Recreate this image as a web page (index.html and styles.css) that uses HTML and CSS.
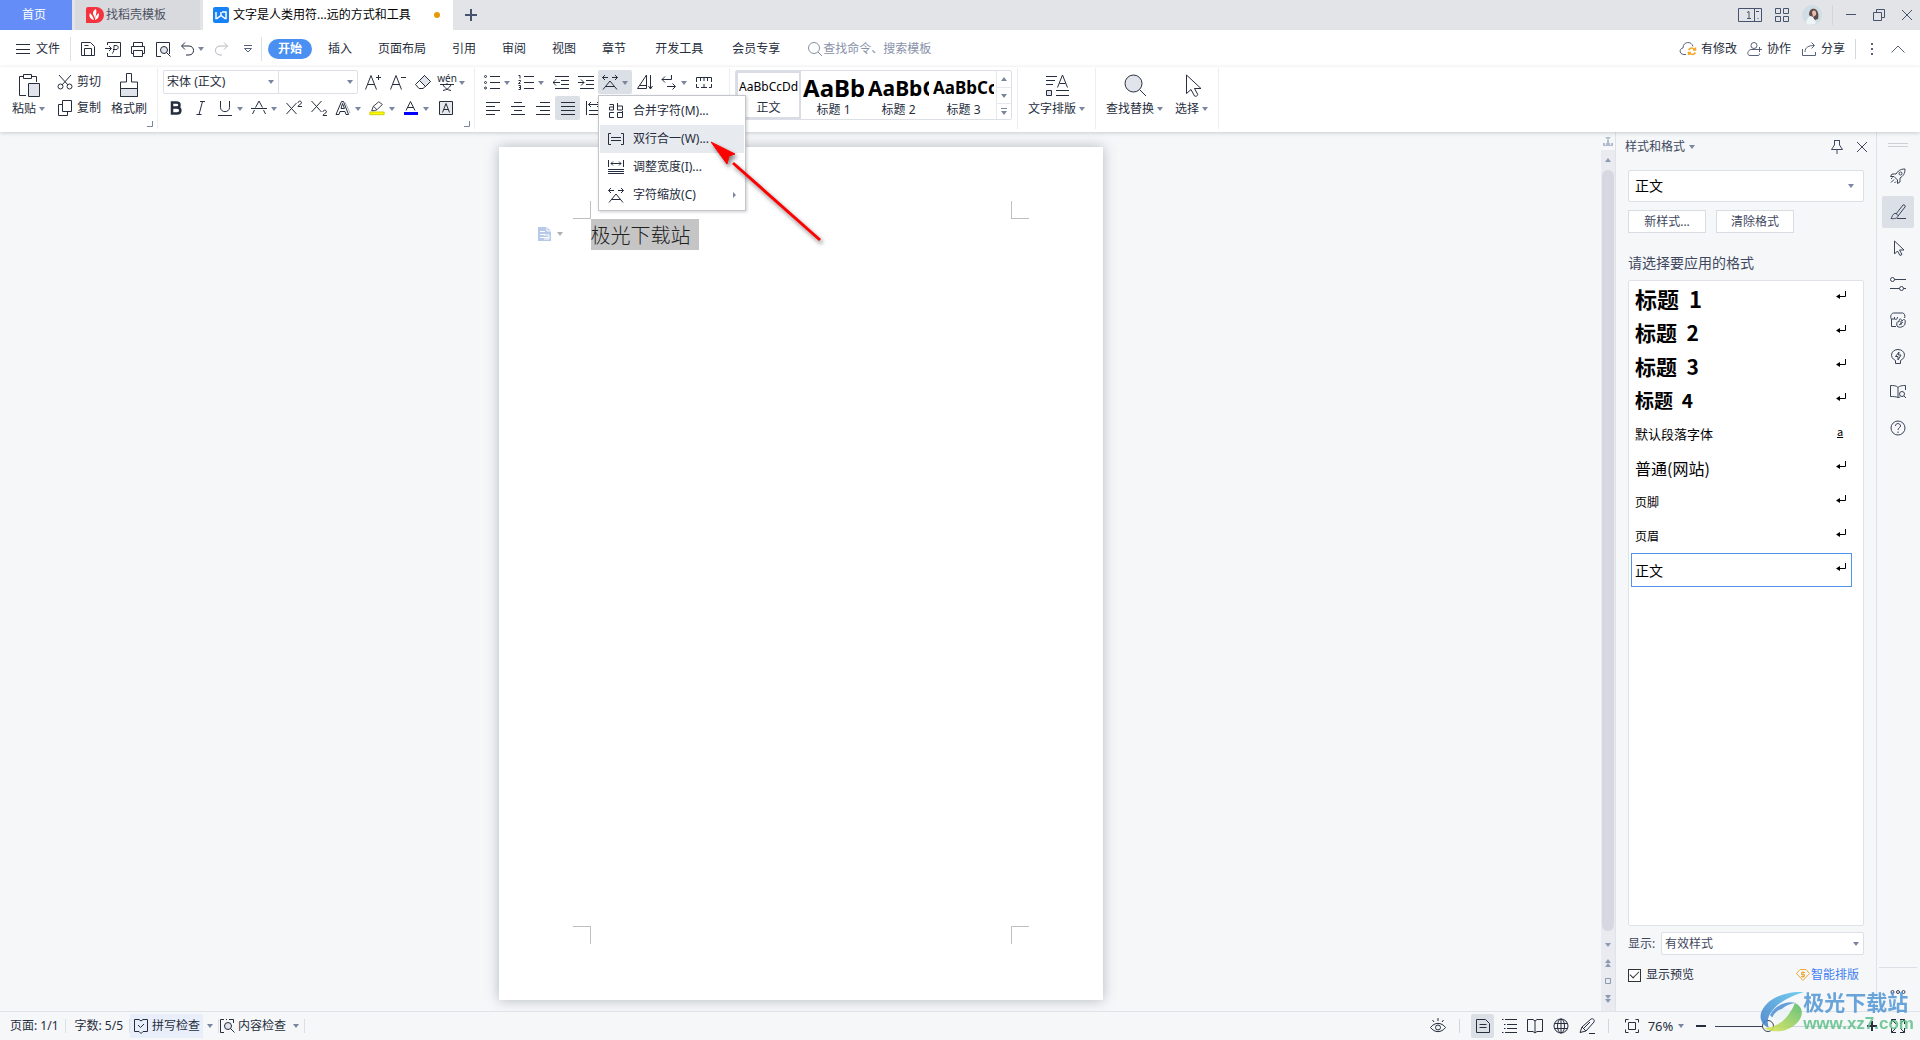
FILE: index.html
```html
<!DOCTYPE html>
<html lang="zh-CN">
<head>
<meta charset="utf-8">
<title>文字是人类用符...远的方式和工具</title>
<link rel="stylesheet" href="styles.css">
</head>
<body>
<svg class="sprite" aria-hidden="true">
  <symbol id="caret" viewBox="0 0 6 4"><path d="M0 0h6L3 4z" fill="currentColor" stroke="none"/></symbol>
  <symbol id="menu" viewBox="0 0 16 16"><path d="M1 3.500h14M1 8.500h14M1 12.500h14"/></symbol>
  <symbol id="save" viewBox="0 0 16 16"><path d="M1.500 1.500h9l4 4v9h-13zM4.500 14.500v-7h7v7M4.500 4.500h4"/></symbol>
  <symbol id="export" viewBox="0 0 16 16"><path d="M2.500 4V1.500h13v14h-13V12M0 7.500h6M4 5l2.500 2.500L4 10M7 12.500c2-1 2-4 2-8h2c3 0 3 4 0 4H8"/></symbol>
  <symbol id="print" viewBox="0 0 16 16"><path d="M3.500 5V1.500h9V5M3.500 12.500h-2v-7h13v7h-2M3.500 9.500h9v6h-9z"/></symbol>
  <symbol id="preview" viewBox="0 0 16 16"><path d="M6 15.500H1.500v-14h13V13"/><circle cx="9" cy="9" r="3.500" fill="#e1e4ea"/><path d="m11.500 11.500 4 4"/></symbol>
  <symbol id="undo" viewBox="0 0 16 16"><path d="M5 1.500 1.500 5 5 8.500M2 5h7c6 0 6 9 0 9H6"/></symbol>
  <symbol id="redo" viewBox="0 0 16 16"><path d="M11 1.500 14.500 5 11 8.500M14 5H7C1 5 1 14 7 14h2"/></symbol>
  <symbol id="more" viewBox="0 0 10 10"><path d="M1 1.500h8M1.500 4.500h7L5 8z"/></symbol>
  <symbol id="search" viewBox="0 0 16 16"><circle cx="7" cy="7" r="5.500"/><path d="m11 11 4 4"/></symbol>
  <symbol id="cloud" viewBox="0 0 18 16"><path d="M7 13.500H5c-5 0-5-6-1-6.500C4 0 13 0 14 5.500"/><path d="M9.500 9c2-3 6-2 6.500 0M16.500 6.500V9H14M16.500 11.500c-2 3-6 2-6.500 0M9.500 14v-2.500H12" stroke="#f5a623" stroke-width="1.500"/></symbol>
  <symbol id="people" viewBox="0 0 16 16"><circle cx="7" cy="4.500" r="3"/><path d="M10 8.500H4C.5 9-.5 14.500 3 14.500h8c1.500 0 1.500-1 1.500-2M10 8.500h5M12.500 6v5"/></symbol>
  <symbol id="share" viewBox="0 0 16 16"><path d="M1.500 8v6.500h13V11M4 11c0-5 4-6.500 9-6.500M10.500 1.500l3 3-3 3"/></symbol>
  <symbol id="up" viewBox="0 0 16 10"><path d="M1.500 8.500 8 2l6.500 6.500"/></symbol>
  <symbol id="paste" viewBox="0 0 24 26"><path d="M6 4.500H2.500v19H9M15 4.500h4.500V10M6.500 2.500h8v4h-8z"/><path d="M11.500 11.500h11v13h-11z" fill="#e1e4ea"/></symbol>
  <symbol id="cut" viewBox="0 0 16 16"><path d="m2 1 9 10M14 1 5 11"/><circle cx="3.500" cy="12.500" r="2.500"/><circle cx="12.500" cy="12.500" r="2.500"/></symbol>
  <symbol id="copy" viewBox="0 0 16 16"><path d="M5.500.5h9v11h-9zM5.500 4.500h-4v11h9v-4"/></symbol>
  <symbol id="brush" viewBox="0 0 24 26"><path d="M9.500 10V1.500h5V10h6v14.500h-17V10z"/><path d="M3.500 16.500h17v8h-17z" fill="#e1e4ea"/></symbol>
  <symbol id="launch" viewBox="0 0 6 6"><path d="M5.500 0v5.500H0"/></symbol>
  <symbol id="grow" viewBox="0 0 16 16"><path d="m.5 15.500 5.500-14 5.500 14M2.500 10.500h7M11 3.500h5M13.500 1v5"/></symbol>
  <symbol id="shrink" viewBox="0 0 16 16"><path d="m.5 15.500 5.500-14 5.500 14M2.500 10.500h7M11 3.500h5"/></symbol>
  <symbol id="eraser" viewBox="0 0 16 16"><path d="m.5 10.500 9-9 6 6-7.500 7H4z"/><path d="m4.500 6.500 6 6 5-5-6-6z" fill="#e1e4ea"/></symbol>
  <symbol id="glyph" viewBox="0 0 16 8"><path d="M1 1.500h14M8 0v1.500M4 2c2 3 4 5 8 5.500M12 2c-2 3-4 5-8 5.500"/></symbol>
  <symbol id="bold" viewBox="0 0 16 16"><path d="M4 2.500h4.500c4 0 4 5 0 5H4zM4 7.500h5c4.500 0 4.500 6 0 6H4z" stroke-width="2.500"/></symbol>
  <symbol id="italic" viewBox="0 0 16 16"><path d="M7 1.500h5M3.500 14.500h5M9.500 1.500 6 14.500"/></symbol>
  <symbol id="underline" viewBox="0 0 16 16"><path d="M3.500 1v6.500c0 5.500 9 5.500 9 0V1M1 15.500h14"/></symbol>
  <symbol id="strike" viewBox="0 0 16 16"><path d="M4.500 7.500 8 1l3.500 6.500M3.500 10 1.500 14M12.500 10l2 4M0 8.500h16"/></symbol>
  <symbol id="super" viewBox="0 0 17 16"><path d="m1 3 10 11M11 3 1 14M12.500 3c0-2.500 3.500-2.500 3.500 0 0 1-3.500 2-3.500 3.500h4"/></symbol>
  <symbol id="sub" viewBox="0 0 17 16"><path d="m1 1 10 11M11 1 1 12M12.500 12c0-2.500 3.500-2.500 3.500 0 0 1-3.500 2-3.500 3.500h4"/></symbol>
  <symbol id="effect" viewBox="0 0 16 16"><path d="M1 14.500 6.500 1.500h2l5 13H11l-1-3H5l-1 3zM6 8.500h3.500l-2-5z"/><path d="m10 2 5 11" stroke="#aeb4c0"/></symbol>
  <symbol id="marker" viewBox="0 0 18 16"><path d="M1 12.500h16v3H1z" fill="#ff0" stroke="#c9c900"/><path d="m3 11 2-5 6-5 4 3-6 6-3 1zM5 6l4 4"/></symbol>
  <symbol id="color" viewBox="0 0 16 16"><path d="M3 10.500 7.500 1.500 12 10.500M4.500 7.500h6"/><path d="M1 12h14v3H1z" fill="#00f" stroke="none"/></symbol>
  <symbol id="shade" viewBox="0 0 16 16"><path d="M1.500 1.500h13v13h-13z" fill="#e6e8ec"/><path d="M4.500 12.500 8 3.500l3.500 9M5.500 9.500h5"/></symbol>
  <symbol id="bullets" viewBox="0 0 16 16"><path d="M6 2.500h10M6 8.500h10M6 14.500h10"/><circle cx="1.500" cy="2.500" r="1"/><circle cx="1.500" cy="8.500" r="1"/><circle cx="1.500" cy="14" r="1"/></symbol>
  <symbol id="numbers" viewBox="0 0 16 16"><path d="M6 2.500h10M6 8.500h10M6 14.500h10M.5 1.500H2v3M.5 6.500h2v1l-2 2h2M.5 11.500h2v4h-2M1 13.500h1"/></symbol>
  <symbol id="outdent" viewBox="0 0 16 16"><path d="M2 2.500h14M8 6.500h8M8 10.500h8M2 14.500h14M0 8.500h7M3 5.500l-3 3 3 3"/></symbol>
  <symbol id="indent" viewBox="0 0 16 16"><path d="M0 2.500h16M8 6.500h8M8 10.500h8M2 14.500h14M0 8.500h6M3 5.500l3 3-3 3"/></symbol>
  <symbol id="scale" viewBox="0 0 16 16"><path d="M.5 3.500H6M3 1 .5 3.500 3 6M10 3.500h5.500M13 1l2.500 2.500L13 6M1 15.500 8 7l7 8.500M4 12.500h8"/></symbol>
  <symbol id="sort" viewBox="0 0 16 16"><path d="M.5 14.500 9.500 1v13.500zM3 11.500h6.500M13.500 1v14M11.500 12l2 3 2-3"/></symbol>
  <symbol id="wrap" viewBox="0 0 16 16"><path d="M10.500 1v4.500H1M4 2.500l-3 3 3 3M6 12.500h8M11.500 9.500l3 3-3 3"/></symbol>
  <symbol id="tabs" viewBox="0 0 16 16"><path d="M.5 8V3.500h15V8M4.500 4v3M8 4v3M11.500 4v3M.5 10v3.500H3M15.500 10v3.500H13M5 13.500h6M8 10v3"/></symbol>
  <symbol id="left" viewBox="0 0 16 16"><path d="M1 2.500h14M1 6.500h9M1 10.500h14M1 14.500h9"/></symbol>
  <symbol id="center" viewBox="0 0 16 16"><path d="M4 2.500h8M1 6.500h14M4 10.500h8M1 14.500h14"/></symbol>
  <symbol id="right" viewBox="0 0 16 16"><path d="M5 2.500h10M1 6.500h14M5 10.500h10M1 14.500h14"/></symbol>
  <symbol id="justify" viewBox="0 0 16 16"><path d="M1 2.500h14M1 6.500h14M1 10.500h14M1 14.500h14"/></symbol>
  <symbol id="spread" viewBox="0 0 16 16"><path d="M1.500 1v14M3.500 4.500h11M6 2 3.500 4.500 6 7M12 2l2.500 2.500L12 7M4 10.500h12M4 14.500h12"/></symbol>
  <symbol id="typeset" viewBox="0 0 24 26"><path d="M1 4.500h11M1 8.500h9M1 12.500h7M12.500 15.500 17.500 3l5 12.500M14.500 11.500h6M11 18.500h13M11 23.500h13"/><path d="M1.500 18.500h5v5h-5z" fill="#e1e4ea"/></symbol>
  <symbol id="find" viewBox="0 0 24 26"><circle cx="10.500" cy="11.500" r="8.500" fill="#e1e4ea"/><path d="m17 18 6 6"/></symbol>
  <symbol id="cursor" viewBox="0 0 24 26"><path d="M6.500 3v18.500l4.500-4 3.500 6.500c2 1 4-1 3-2l-3-5.500H21z"/></symbol>
  <symbol id="combine" viewBox="0 0 16 16"><path d="M1.500 1.500h4v5.500h-4V4h4M9.500 0v7h5V3h-5M6 9.500H1.500v5H6M14.500 8v6.500h-5v-5h5"/></symbol>
  <symbol id="twolines" viewBox="0 0 16 16"><path d="M3 2.500H.5v11H3M13 2.500h2.500v11H13M3 6.500h10M3 9.500h10"/></symbol>
  <symbol id="width" viewBox="0 0 16 16"><path d="M.5 1v7M15.500 1v7M3 4.500h10M5 2.500l-2 2 2 2M11 2.500l2 2-2 2M0 10.500h16M0 12.500h16M0 14.500h16"/></symbol>
  <symbol id="pin" viewBox="0 0 14 14"><path d="M4 .5h6M4.500 1v4l-3 4.500h11l-3-4.500V1M7 9.500V14"/></symbol>
  <symbol id="close" viewBox="0 0 12 12"><path d="m1 1 10 10M11 1 1 11"/></symbol>
  <symbol id="return" viewBox="0 0 10 10"><path d="M9.500 1v5.500H2" stroke="#000"/><path d="M4 4v5L0 6.500z" fill="#000" stroke="none"/></symbol>
  <symbol id="rocket" viewBox="0 0 16 16"><path d="M15 1c-5 0-7 2-9 5H2L.5 8.500H4L7.500 12v3.500L10 14v-4c3-2 5-4 5-9zM1 14.500l3-3M1 11l1.500-1.500M4.500 15 6 13.500"/><circle cx="10.500" cy="5.500" r="1.500"/></symbol>
  <symbol id="pen" viewBox="0 0 16 16"><path d="m6 10 7-9c1-1 3 1 2 2l-7 9M6 9.500c-3-.5-3 2-5 5 3 .5 7 0 7-3zM7 14.500h9"/></symbol>
  <symbol id="arrow" viewBox="0 0 16 16"><path d="M4.500 1v13l3-3 2.500 4.500 2-1-2.500-4.500h4.500z"/></symbol>
  <symbol id="sliders" viewBox="0 0 16 16"><circle cx="2.500" cy="3.500" r="2"/><path d="M4.500 3.500H16M0 12.500h9.500M13.500 12.500H16"/><circle cx="11.500" cy="12.500" r="2"/></symbol>
  <symbol id="store" viewBox="0 0 16 16"><path d="M1.500 7v7.500H6M1.500 7c-2-2 0-6 2-6h9c2 0 3 3 2 5M1.500 7h3V5M4.500 7c2 1 3 0 3-2M7 14c-1-4 1-5 2-4 0-4 2-4 3-1 2-3 4-1 3 2 1 3-6 6-8 3zM9 13l4-3M11 9v4"/></symbol>
  <symbol id="bulb" viewBox="0 0 16 16"><path d="M5.500 12.500C-1 9.500 1 1.500 8 1.500s9 8 2.500 11v3h-5zM9 4 5.500 8.500H8V12l3-5H8.500z"/></symbol>
  <symbol id="bookfind" viewBox="0 0 16 16"><path d="M8 3.500v10c-2-1-5-1-7.500-1v-11c3 0 6 0 7.500 2 2-2 5-2 7.500-2V6M8 13.500l2-.5"/><circle cx="12" cy="10" r="2.500"/><path d="m14 12 2 2"/></symbol>
  <symbol id="help" viewBox="0 0 16 16"><circle cx="8" cy="8" r="7"/><path d="M5.500 6c0-3.500 5-3 5 0 0 1.500-2.500 2-2.500 4M8 11.500V13"/></symbol>
  <symbol id="dots" viewBox="0 0 16 6"><circle cx="2.500" cy="3" r="1.500"/><circle cx="8" cy="3" r="1.500"/><circle cx="13.500" cy="3" r="1.500"/></symbol>
  <symbol id="spell" viewBox="0 0 16 16"><path d="M6 1.500H1.500v12H6l2 2 2-2h4.500v-12H10L8 3zM5 7l2.500 2.500L11 6"/></symbol>
  <symbol id="content" viewBox="0 0 16 16"><path d="M5 1.500H1.500v13H5M10 1.500h4.500V5M7 1.500h1"/><circle cx="9" cy="8" r="3.500" fill="#e1e4ea"/><path d="m11.500 10.500 4 4"/></symbol>
  <symbol id="eye" viewBox="0 0 16 16"><path d="M.5 9.500c4-5.500 11-5.500 15 0-4 5.500-11 5.500-15 0zM8 0v3M2.500 2 4 4M13.500 2 12 4"/><circle cx="8" cy="9.500" r="2.500"/></symbol>
  <symbol id="pagev" viewBox="0 0 16 16"><path d="M1.500 1.500h9l4 4v9h-13zM4.500 6.500h7M4.500 9.500h7"/></symbol>
  <symbol id="outline" viewBox="0 0 16 16"><path d="M1 1.500h1.500M4 1.500h12M3 6.500h1.500M6 6.500h10M3 10.500h1.500M6 10.500h10M1 14.500h1.500M4 14.500h12"/></symbol>
  <symbol id="book" viewBox="0 0 16 16"><path d="M8 3v12L6 13.500H.5v-12H6L8 3l2-1.500h5.500v12H10L8 15"/></symbol>
  <symbol id="globe" viewBox="0 0 16 16"><circle cx="8" cy="8" r="7"/><ellipse cx="8" cy="8" rx="3.500" ry="7"/><path d="M1.500 5.500h13M1.500 10.500h13M8 1v14"/></symbol>
  <symbol id="edit" viewBox="0 0 16 16"><path d="m3 9 9-8c2-1 4 1 3 3l-8 9-6 1.500zM3 9l4 4M5 10l6-6M10 15.500h6"/></symbol>
  <symbol id="fit" viewBox="0 0 16 16"><path d="M1.500 4.500v-3h3M11.500 1.500h3v3M14.500 11.500v3h-3M4.500 14.500h-3v-3M4.500 4.500h7v7h-7z"/></symbol>
  <symbol id="full" viewBox="0 0 16 16"><path d="M1.500 6V1.500H6M10 1.500h4.500V6M14.500 10v4.500H10M6 14.500H1.500V10M1.500 1.500 6 6M14.500 1.500 10 6M14.500 14.500 10 10M1.500 14.500 6 10"/></symbol>
  <symbol id="doc" viewBox="0 0 14 14"><path d="M0 0h9l4 4v10H0z" fill="#b6c9e8" stroke="none"/><path d="M2 4.500h5M2 7.500h5M2 10.500h9M6 8h5v4H6M9 0v4h4" stroke="#fff"/></symbol>
</svg>

<header class="titlebar">
  <button class="doc-tab home">首页</button>
  <button class="doc-tab template"><svg class="i16"><path d="M2 0h8a6 6 0 0 1 0 16H0V2a2 2 0 0 1 2-2z" fill="#f5333f" stroke="none"/><path d="M8 13C3 12 3 8 4 6c1 1 3 3 4 7zm-1-6c0-3 1-4 3-5 1 3 0 6-1 9zm2 6c0-3 1-5 4-7 0 4-1 6-4 7z" fill="#fff" stroke="none"/></svg>找稻壳模板</button>
  <button class="doc-tab current"><svg class="i16"><rect width="16" height="16" rx="2" fill="#1682f5" stroke="none"/><path d="M3 5v6.500h1L8 8.500l4 3h1V5H9M8 5v4" stroke="#fff" stroke-width="1.500"/></svg><span>文字是人类用符...远的方式和工具</span><i class="unsaved"></i></button>
  <button class="new-tab" aria-label="新建"><svg class="i12"><path d="M6 0v12M0 6h12" stroke-width="2"/></svg></button>
  <div class="window-tools">
    <button aria-label="窗口"><svg class="i24"><path d="M.5 5.500h23v13H.500zM16.500 5.500v13M18 8.500h3M19.500 15.500h1"/><path d="M9 9.500l2-1v7M9 15.500h4"/></svg></button>
    <button aria-label="应用"><svg class="i16"><path d="M1.500 1.500h5v5h-5zM9.500 1.500h5v5h-5zM1.500 9.500h5v5h-5zM9.500 9.500h5v5h-5z"/></svg></button>
    <button aria-label="账户"><svg class="i20"><g stroke="none"><circle cx="10" cy="10" r="10" fill="#cfdee4"/><path d="M7 10c0-4 2-7 6-6 3 1 4 6 3 10l-3 1z" fill="#5f4a4c"/><path d="M10 7c2-3 5-1 4 3l-3 2z" fill="#e9bfae"/><path d="M4 18c1-5 4-8 7-6l3 6c-3 2-7 2-10 0z" fill="#eef5f8"/></g></svg></button>
    <i class="vr"></i>
    <button aria-label="最小化"><svg class="i12"><path d="M1 5.500h10"/></svg></button>
    <button aria-label="还原"><svg class="i12"><path d="M.5 3.500h8v8h-8zM3.500 3.500v-3h8v8h-3"/></svg></button>
    <button aria-label="关闭"><svg class="i12"><use href="#close"/></svg></button>
  </div>
</header>

<nav class="menubar">
  <button class="file"><svg class="i16"><use href="#menu"/></svg>文件</button>
  <div class="quick">
    <button aria-label="保存"><svg class="i16"><use href="#save"/></svg></button>
    <button aria-label="输出"><svg class="i16"><use href="#export"/></svg></button>
    <button aria-label="打印"><svg class="i16"><use href="#print"/></svg></button>
    <button aria-label="预览"><svg class="i16"><use href="#preview"/></svg></button>
    <button class="undo" aria-label="撤销"><svg class="i16"><use href="#undo"/></svg><svg class="caret"><use href="#caret"/></svg></button>
    <button class="redo" aria-label="恢复"><svg class="i16"><use href="#redo"/></svg></button>
    <button aria-label="更多"><svg class="i10"><use href="#more"/></svg></button>
  </div>
  <div class="tabs">
    <button class="active">开始</button><button>插入</button><button>页面布局</button><button>引用</button><button>审阅</button><button>视图</button><button>章节</button><button class="wide">开发工具</button><button>会员专享</button>
  </div>
  <label class="search"><svg class="i16"><use href="#search"/></svg><input type="text" placeholder="查找命令、搜索模板"></label>
  <div class="menu-right">
    <button><svg class="i18"><use href="#cloud"/></svg>有修改</button>
    <button><svg class="i16"><use href="#people"/></svg>协作</button>
    <button><svg class="i16"><use href="#share"/></svg>分享</button>
    <i class="vr"></i>
    <button class="kebab" aria-label="选项"><svg class="kebab-dots"><path d="M0 1h2M0 6h2M0 11h2" stroke-width="2"/></svg></button>
    <button aria-label="收起"><svg class="i16x10"><use href="#up"/></svg></button>
  </div>
</nav>

<section class="ribbon">
  <div class="group clipboard">
    <button class="big"><svg class="i24x26"><use href="#paste"/></svg><span>粘贴<svg class="caret"><use href="#caret"/></svg></span></button>
    <div class="stack">
      <button class="line"><svg class="i16"><use href="#cut"/></svg>剪切</button>
      <button class="line"><svg class="i16"><use href="#copy"/></svg>复制</button>
    </div>
    <button class="big"><svg class="i24x26"><use href="#brush"/></svg><span>格式刷</span></button>
    <svg class="launcher"><use href="#launch"/></svg>
  </div>
  <div class="group font">
    <div class="row">
      <div class="combo pair">
        <div class="picker name"><select aria-label="字体"><option>宋体 (正文)</option></select><svg class="caret"><use href="#caret"/></svg></div>
        <div class="picker size"><select aria-label="字号"><option></option></select><svg class="caret"><use href="#caret"/></svg></div>
      </div>
      <button class="tool" aria-label="增大字号"><svg class="i16"><use href="#grow"/></svg></button>
      <button class="tool" aria-label="减小字号"><svg class="i16"><use href="#shrink"/></svg></button>
      <button class="tool" aria-label="清除格式"><svg class="i16"><use href="#eraser"/></svg></button>
      <button class="tool drop pinyin"><span>wén<svg class="i16x8"><use href="#glyph"/></svg></span><svg class="caret"><use href="#caret"/></svg></button>
    </div>
    <div class="row">
      <button class="tool" aria-label="加粗"><svg class="i16"><use href="#bold"/></svg></button>
      <button class="tool" aria-label="倾斜"><svg class="i16"><use href="#italic"/></svg></button>
      <button class="tool drop" aria-label="下划线"><svg class="i16"><use href="#underline"/></svg><svg class="caret"><use href="#caret"/></svg></button>
      <button class="tool drop" aria-label="删除线"><svg class="i16"><use href="#strike"/></svg><svg class="caret"><use href="#caret"/></svg></button>
      <button class="tool" aria-label="上标"><svg class="i18"><use href="#super"/></svg></button>
      <button class="tool" aria-label="下标"><svg class="i18"><use href="#sub"/></svg></button>
      <button class="tool drop" aria-label="文字效果"><svg class="i16"><use href="#effect"/></svg><svg class="caret"><use href="#caret"/></svg></button>
      <button class="tool drop" aria-label="突出显示"><svg class="i16"><use href="#marker"/></svg><svg class="caret"><use href="#caret"/></svg></button>
      <button class="tool drop" aria-label="字体颜色"><svg class="i16"><use href="#color"/></svg><svg class="caret"><use href="#caret"/></svg></button>
      <button class="tool" aria-label="底纹"><svg class="i16"><use href="#shade"/></svg></button>
    </div>
    <svg class="launcher"><use href="#launch"/></svg>
  </div>
  <div class="group paragraph">
    <div class="row">
      <button class="tool drop" aria-label="项目符号"><svg class="i16"><use href="#bullets"/></svg><svg class="caret"><use href="#caret"/></svg></button>
      <button class="tool drop" aria-label="编号"><svg class="i16"><use href="#numbers"/></svg><svg class="caret"><use href="#caret"/></svg></button>
      <button class="tool" aria-label="减少缩进"><svg class="i16"><use href="#outdent"/></svg></button>
      <button class="tool" aria-label="增加缩进"><svg class="i16"><use href="#indent"/></svg></button>
      <div class="menu-anchor">
        <button class="tool drop on" aria-label="中文版式"><svg class="i16"><use href="#scale"/></svg><svg class="caret"><use href="#caret"/></svg></button>
        <div class="menu">
          <button><svg class="i16"><use href="#combine"/></svg>合并字符(M)...</button>
          <button class="hover"><svg class="i16"><use href="#twolines"/></svg>双行合一(W)...</button>
          <button><svg class="i16"><use href="#width"/></svg>调整宽度(I)...</button>
          <button><svg class="i16"><use href="#scale"/></svg>字符缩放(C)<svg class="submenu"><path d="M0 0v6l3-3z" fill="currentColor" stroke="none"/></svg></button>
          <svg class="pointer" viewBox="0 0 120 110"><path d="M109 101 22 24" stroke="#f00" stroke-width="3"/><path d="m0 3 24 12-6 2-2 8z" fill="#f00" stroke="#f00" stroke-width="1"/></svg>
        </div>
      </div>
      <button class="tool" aria-label="排序"><svg class="i16"><use href="#sort"/></svg></button>
      <button class="tool drop" aria-label="显示标记"><svg class="i16"><use href="#wrap"/></svg><svg class="caret"><use href="#caret"/></svg></button>
      <button class="tool" aria-label="制表位"><svg class="i16"><use href="#tabs"/></svg></button>
    </div>
    <div class="row">
      <button class="tool" aria-label="左对齐"><svg class="i16"><use href="#left"/></svg></button>
      <button class="tool" aria-label="居中"><svg class="i16"><use href="#center"/></svg></button>
      <button class="tool" aria-label="右对齐"><svg class="i16"><use href="#right"/></svg></button>
      <button class="tool on" aria-label="两端对齐"><svg class="i16"><use href="#justify"/></svg></button>
      <button class="tool" aria-label="分散对齐"><svg class="i16"><use href="#spread"/></svg></button>
    </div>
  </div>
  <div class="group styles">
    <div class="gallery">
      <button class="style chosen"><b class="p0">AaBbCcDd</b><span>正文</span></button>
      <button class="style"><b class="p1">AaBb</b><span>标题 1</span></button>
      <button class="style"><b class="p2">AaBbC</b><span>标题 2</span></button>
      <button class="style"><b class="p3">AaBbCc</b><span>标题 3</span></button>
      <div class="gallery-nav">
        <button aria-label="上"><svg class="caret flip"><use href="#caret"/></svg></button>
        <button aria-label="下"><svg class="caret"><use href="#caret"/></svg></button>
        <button aria-label="展开"><svg class="expand"><path d="M0 .5h6" /><path d="M0 3h6L3 7z" fill="currentColor" stroke="none"/></svg></button>
      </div>
    </div>
  </div>
  <div class="group layout"><button class="big"><svg class="i24x26"><use href="#typeset"/></svg><span>文字排版<svg class="caret"><use href="#caret"/></svg></span></button></div>
  <div class="group layout">
    <button class="big"><svg class="i24x26"><use href="#find"/></svg><span>查找替换<svg class="caret"><use href="#caret"/></svg></span></button>
    <button class="big"><svg class="i24x26"><use href="#cursor"/></svg><span>选择<svg class="caret"><use href="#caret"/></svg></span></button>
  </div>
</section>

<div class="workspace">
  <main class="canvas">
    <article class="paper">
      <div class="text-area">
        <i class="crop tl"></i><i class="crop tr"></i><i class="crop bl"></i><i class="crop br"></i>
        <button class="para-mark" aria-label="段落"><svg class="i14"><use href="#doc"/></svg><svg class="caret"><use href="#caret"/></svg></button>
        <p><mark>极光下载站</mark></p>
      </div>
    </article>
  </main>
  <div class="scroll">
    <svg class="i10 ruler"><path d="M2 0h6L5 3zM0 6h2v2h1V6h4v2h1V6h2v3H0zM4 3h2v4H4z" fill="currentColor" stroke="none"/></svg>
    <div class="track">
      <button aria-label="向上"><svg class="caret flip"><use href="#caret"/></svg></button>
      <i class="thumb"></i>
      <button aria-label="向下"><svg class="caret"><use href="#caret"/></svg></button>
      <button aria-label="上一页"><svg class="i8"><path d="M1 4h6L4 0zM1 8h6L4 4z" fill="currentColor" stroke="none"/></svg></button>
      <button aria-label="对象"><svg class="i8"><path d="M1.500 1.500h5v5h-5z"/></svg></button>
      <button aria-label="下一页"><svg class="i8"><path d="M1 0h6L4 4zM1 4h6L4 8z" fill="currentColor" stroke="none"/></svg></button>
    </div>
  </div>
  <aside class="panel">
    <div class="panel-head"><h2>样式和格式<svg class="caret"><use href="#caret"/></svg></h2><button aria-label="固定"><svg class="i14"><use href="#pin"/></svg></button><button aria-label="关闭"><svg class="i12"><use href="#close"/></svg></button></div>
    <div class="combo picker current-style"><select aria-label="当前样式"><option>正文</option></select><svg class="caret"><use href="#caret"/></svg></div>
    <div class="panel-buttons"><button>新样式...</button><button>清除格式</button></div>
    <h3>请选择要应用的格式</h3>
    <ul class="style-list">
      <li class="h1">标题  1<svg class="i10"><use href="#return"/></svg></li>
      <li class="h2">标题  2<svg class="i10"><use href="#return"/></svg></li>
      <li class="h2">标题  3<svg class="i10"><use href="#return"/></svg></li>
      <li class="h4">标题  4<svg class="i10"><use href="#return"/></svg></li>
      <li class="dflt">默认段落字体<u>a</u></li>
      <li class="web">普通(网站)<svg class="i10"><use href="#return"/></svg></li>
      <li>页脚<svg class="i10"><use href="#return"/></svg></li>
      <li>页眉<svg class="i10"><use href="#return"/></svg></li>
      <li class="body picked">正文<svg class="i10"><use href="#return"/></svg></li>
    </ul>
    <div class="show"><label for="show">显示:</label><div class="combo picker"><select id="show"><option>有效样式</option></select><svg class="caret"><use href="#caret"/></svg></div></div>
    <div class="preview"><label><input type="checkbox" checked>显示预览</label><a href="#"><svg class="i14"><path d="M4 1.500h6l3.500 4L7 12.500.5 5.500z" stroke="#f0a93a"/><path d="M9 4.500H5.500v2h3v2H5M7 3v7" stroke="#f0a93a"/></svg>智能排版</a></div>
  </aside>
  <nav class="rail">
    <i class="grip"></i>
    <button aria-label="推荐"><svg class="i16"><use href="#rocket"/></svg></button>
    <button class="on" aria-label="样式"><svg class="i16"><use href="#pen"/></svg></button>
    <button aria-label="选择"><svg class="i16"><use href="#arrow"/></svg></button>
    <button aria-label="属性"><svg class="i16"><use href="#sliders"/></svg></button>
    <button aria-label="素材"><svg class="i16"><use href="#store"/></svg></button>
    <button aria-label="灵感"><svg class="i16"><use href="#bulb"/></svg></button>
    <button aria-label="词典"><svg class="i16"><use href="#bookfind"/></svg></button>
    <button aria-label="帮助"><svg class="i16"><use href="#help"/></svg></button>
    <div class="rail-foot"><button aria-label="更多"><svg class="i16x6"><use href="#dots"/></svg></button></div>
  </nav>
</div>

<footer class="status">
  <span class="cell">页面: 1/1</span>
  <span class="cell">字数: 5/5</span>
  <button class="check spell"><span><svg class="i16"><use href="#spell"/></svg>拼写检查</span><svg class="caret"><use href="#caret"/></svg></button>
  <button class="check"><span><svg class="i16"><use href="#content"/></svg>内容检查</span><svg class="caret"><use href="#caret"/></svg></button>
  <div class="status-right">
    <button aria-label="护眼"><svg class="i16"><use href="#eye"/></svg></button>
    <i class="vr"></i>
    <button class="on" aria-label="页面视图"><svg class="i16"><use href="#pagev"/></svg></button>
    <button aria-label="大纲"><svg class="i16"><use href="#outline"/></svg></button>
    <button aria-label="阅读"><svg class="i16"><use href="#book"/></svg></button>
    <button aria-label="网页"><svg class="i16"><use href="#globe"/></svg></button>
    <button aria-label="写作"><svg class="i16"><use href="#edit"/></svg></button>
    <i class="vr"></i>
    <button aria-label="适应"><svg class="i16"><use href="#fit"/></svg></button>
    <button class="percent">76%<svg class="caret"><use href="#caret"/></svg></button>
    <button aria-label="缩小"><svg class="i10"><path d="M0 5h10" stroke-width="2"/></svg></button>
    <input class="zoom" type="range" min="0" max="100" value="36" aria-label="缩放">
    <button aria-label="放大"><svg class="i10"><path d="M0 5h10M5 0v10" stroke-width="2"/></svg></button>
    <button class="fullscreen" aria-label="全屏"><svg class="i16"><use href="#full"/></svg></button>
  </div>
</footer>

<div class="watermark">
  <svg class="swirl" viewBox="0 0 44 42">
    <defs>
      <linearGradient id="blue" x1="0" y1="1" x2="1" y2="0"><stop offset="0" stop-color="#3c78c4"/><stop offset="1" stop-color="#5cc8f2"/></linearGradient>
      <linearGradient id="green" x1="0" y1="1" x2="1" y2="0"><stop offset="0" stop-color="#e3e84e"/><stop offset="1" stop-color="#4db86a"/></linearGradient>
    </defs>
    <g stroke="none"><path d="M44 1C24 0 6 8 1 22c-2 8 3 13 8 15C4 26 14 10 44 1z" fill="url(#blue)"/><path d="M10 24c5-10 17-15 26-12-10 1-16 6-18 13 4 0 8-2 10-5 0 8-13 12-18 4z" fill="#4a8fd6"/><path d="M4 37c12 0 24-8 31-25 9 4 9 14 1 21-10 9-24 9-32 4z" fill="url(#green)"/><path d="M12 27c7 5 16 0 18-8-6-4-15 0-18 8z" fill="#eaf4f8"/></g>
  </svg>
  <div><strong>极光下载站</strong><span>www.xz7.com</span></div>
</div>
</body>
</html>
```
FILE: styles.css
```css
* { box-sizing: border-box; }

body {
  margin: 0;
  min-height: 100vh;
  display: flex;
  flex-direction: column;
  background: #f5f7f9;
  color: #262d3d;
  font: 12px/18px "Noto Sans", "Noto Sans CJK SC", sans-serif;
}

button, select, input { font: inherit; color: inherit; }
button {
  display: flex;
  align-items: center;
  justify-content: center;
  padding: 0;
  border: 0;
  background: none;
  white-space: nowrap;
}
h2, h3, p, ul { margin: 0; padding: 0; font-weight: 400; }

svg { flex: none; fill: none; stroke: currentColor; stroke-width: 1; overflow: visible; }
.sprite { position: absolute; width: 0; height: 0; }
.i8 { width: 8px; height: 8px; }
.i10 { width: 10px; height: 10px; }
.i12 { width: 12px; height: 12px; }
.i14 { width: 14px; height: 14px; }
.i16 { width: 16px; height: 16px; }
.i18 { width: 18px; height: 16px; }
.i20 { width: 20px; height: 20px; }
.i24 { width: 24px; height: 24px; }
.i24x26 { width: 24px; height: 26px; }
.i16x10 { width: 16px; height: 10px; }
.i16x8 { width: 16px; height: 8px; }
.i16x6 { width: 16px; height: 6px; }
.caret { width: 6px; height: 4px; color: #7a869f; }
.flip { transform: rotate(180deg); }
.vr { width: 1px; height: 20px; background: #d3d6dc; }

/* Title bar */
.titlebar { display: flex; height: 30px; background: #e2e4e8; color: #46536f; }
.doc-tab { gap: 4px; margin-right: 3px; }
.home { width: 72px; padding-right: 4px; background: #648df8; color: #fff; }
.template { width: 125px; padding-left: 11px; justify-content: flex-start; background: #d9dade; color: #4c5263; }
.current { width: 250px; padding: 0 13px 0 10px; justify-content: flex-start; background: #fff; color: #000; margin: 0; }
.unsaved { width: 6px; height: 6px; margin-left: auto; border-radius: 50%; background: #e79a09; }
.new-tab { width: 36px; }
.window-tools { display: flex; align-items: center; gap: 12px; margin-left: auto; padding-right: 7px; }
.window-tools .vr { margin-left: -2px; }
.window-tools .vr ~ button + button { margin-left: 4px; }

/* Menu row */
.menubar { display: flex; align-items: center; height: 37px; padding-top: 1px; background: #fff; }
.file { gap: 5px; height: 24px; padding: 0 10px 0 15px; border-right: 1px solid #dcdfe5; }
.quick { display: flex; align-items: center; gap: 9px; height: 24px; padding: 0 8px 0 9px; border-right: 1px solid #dcdfe5; }
.undo { gap: 2px; }
.redo { color: #b4b8c1; margin-right: 5px; }
.quick button:last-child { color: #59627a; }
.tabs { display: flex; padding-left: 3px; }
.tabs button { height: 20px; padding: 0 13px; }
.tabs .active { margin: 0 3px; padding: 0 10px; border-radius: 10px; background: #4a90f2; color: #fff; font-weight: 700; }
.tabs .wide { padding: 0 16px; }
.search { display: flex; align-items: center; margin-left: 14px; color: #8791a8; }
.search input { width: 130px; padding: 0; border: 0; outline: 0; background: none; }
.search input::placeholder { color: #8791a8; opacity: 1; }
.menu-right { display: flex; align-items: center; gap: 10px; margin-left: auto; padding-right: 14px; }
.menu-right button { gap: 4px; }
.menu-right svg { color: #59627a; }
.kebab { width: 16px; }
.kebab-dots { width: 2px; height: 12px; }
.menu-right .kebab { margin-left: -2px; }

/* Ribbon */
.ribbon {
  position: relative;
  z-index: 2;
  display: flex;
  height: 65px;
  padding: 1px 0 3px;
  background: #fff;
  box-shadow: 0 1px 4px rgba(40, 50, 70, .22);
}
.group { position: relative; padding: 2px 5px 0; border-right: 1px solid #eceef1; }
.group .row { display: flex; height: 24px; margin-bottom: 2px; }
.clipboard { display: flex; padding: 2px 8px 0 10px; }
.big { flex-direction: column; gap: 2px; height: 50px; padding-top: 2px; justify-content: flex-start; }
.big span { display: flex; align-items: center; gap: 3px; padding: 0 3px; }
.clipboard .big > span { padding: 0 2px; }
.stack { display: grid; grid-auto-rows: 24px; row-gap: 2px; margin: 0 8px 0 10px; }
.line { gap: 4px; }
.launcher { position: absolute; right: 4px; bottom: 2px; width: 6px; height: 6px; color: #7a869f; }
.tool { width: 25px; height: 24px; }
.drop { width: 34px; gap: 4px; padding-left: 4px; justify-content: flex-start; }
.drop .caret { margin-top: 1px; }
.on { border-radius: 2px; background: #dbe0e7; }
.pinyin span { display: flex; flex-direction: column; width: 16px; align-items: center; font-size: 10px; line-height: 9px; }

.combo { border: 1px solid #dcdfe5; border-radius: 2px; background: #fff; }
.pair { display: flex; width: 195px; height: 24px; margin-right: 2px; }
.picker { position: relative; }
.picker select { width: 100%; height: 100%; padding: 0 18px 0 3px; border: 0; outline: 0; background: none; appearance: none; }
.picker .caret { position: absolute; right: 4px; top: calc(50% - 2px); pointer-events: none; }
.name { border-right: 1px solid #dcdfe5; }
.size { flex: 2; }
.font .name { flex: 0 0 115px; }

.paragraph { z-index: 2; padding-right: 13px; }
.menu-anchor { position: relative; }
.menu {
  position: absolute;
  top: 25px;
  left: 0;
  width: 148px;
  padding: 1px;
  border: 1px solid #c3c6cc;
  background: #fff;
  box-shadow: 1px 1px 3px rgba(0, 0, 0, .2);
}
.menu button { width: 100%; height: 28px; gap: 9px; padding: 0 8px; justify-content: flex-start; }
.menu .hover { background: #e7eaef; }
.submenu { width: 3px; height: 6px; margin-left: auto; color: #7a869f; }
.pointer { position: absolute; left: 112px; top: 43px; width: 120px; height: 110px; filter: drop-shadow(2px 3px 2px rgba(0, 0, 0, .5)); }

.gallery { display: flex; width: 277px; height: 50px; border: 1px solid #dcdfe5; border-radius: 2px; color: #262d3d; }
.style { flex: 0 0 65px; flex-direction: column; align-items: stretch; overflow: hidden; padding: 0 2px; }
.style b { height: 30px; overflow: hidden; color: #000; line-height: 34px; text-align: left; }
.style span { line-height: 18px; }
.chosen { padding: 0 1px; border: 2px solid #d9dce4; }
.style .p0 { height: 28px; font-size: 12px; font-weight: 400; line-height: 28px; }
.p1 { font-size: 24px; }
.p2 { font-size: 21px; }
.p3 { font-size: 17px; }
.gallery-nav { flex: 1; display: grid; grid-template-rows: 1fr 1fr 1fr; border-left: 1px solid #e6e8ec; }
.gallery-nav button + button { border-top: 1px solid #e6e8ec; }
.expand { width: 6px; height: 7px; color: #7a869f; }
.layout { display: flex; gap: 6px; padding: 2px 7px 0; }

/* Workspace */
.workspace { flex: 1; display: flex; min-height: 0; }
.canvas { flex: 1; padding: 15px 20px 10px; overflow: hidden; }
.paper { width: 604px; max-width: 100%; aspect-ratio: 604 / 853; margin: 0 auto; padding: 72px 92px 74px 92px; background: #fff; box-shadow: 0 0 12px rgba(60, 70, 90, .35); }
.text-area { position: relative; height: 100%; }
.text-area p { font-size: 20px; line-height: 31px; font-family: "Noto Sans CJK SC", sans-serif; font-weight: 300; }
.text-area mark { display: inline-block; padding-right: 8px; background: #c5c5c5; color: #222; }
.crop { position: absolute; width: 18px; height: 18px; border: 0 solid #c0c0c0; }
.tl { right: 100%; bottom: 100%; border-width: 0 1px 1px 0; }
.tr { left: 100%; bottom: 100%; border-width: 0 0 1px 1px; }
.bl { right: 100%; top: 100%; border-width: 1px 1px 0 0; }
.br { left: 100%; top: 100%; border-width: 1px 0 0 1px; }
.para-mark { position: absolute; right: calc(100% + 28px); top: 8px; gap: 5px; }
.para-mark .caret { color: #b0b0b0; }

.scroll { display: flex; flex-direction: column; align-items: center; width: 14px; color: #8e9ab3; }
.ruler { margin: 5px 0 3px; color: #b3bccf; }
.track { flex: 1; display: flex; flex-direction: column; align-items: center; width: 14px; padding-bottom: 3px; background: #eaebf1; }
.track button { height: 18px; width: 14px; }
.track button:first-child { height: 20px; }
.track .caret { color: #8e9ab3; }
.thumb { flex: 1; width: 12px; margin-bottom: 5px; border-radius: 6px; background: #d5d8e1; }

.panel { display: flex; flex-direction: column; width: 261px; padding: 0 12px 27px 12px; border-left: 1px solid #dfe2e8; color: #3f4860; }
.panel-head { display: flex; align-items: center; gap: 12px; height: 30px; margin: 0 -4px 8px -3px; }
.panel-head h2 { display: flex; align-items: center; gap: 4px; margin-right: auto; font-size: 12px; }
.current-style { height: 32px; color: #000; font-size: 14px; }
.current-style select { padding-left: 6px; }
.current-style .caret { right: 8px; width: 8px; }
.panel-buttons { display: flex; gap: 10px; margin: 8px 0 19px; }
.panel-buttons button { width: 78px; height: 23px; border: 1px solid #d9dce2; background: #fff; }
.panel h3 { font-size: 14px; line-height: 22px; }
.style-list { flex: 1; margin: 6px 0; padding: 0 11px 0 2px; border: 1px solid #dfe2e8; border-radius: 2px; background: #fff; list-style: none; }
.style-list li { display: flex; align-items: center; justify-content: space-between; height: 34px; padding: 0 6px 0 4px; color: #000; white-space: pre; font-family: "Noto Sans CJK SC", sans-serif; }
.style-list .i10 { margin-bottom: 6px; }
.style-list u { width: 9px; margin-bottom: 6px; font-size: 11px; }
.style-list .h1 { font-size: 22px; font-weight: 700; }
.style-list .h2 { font-size: 21px; font-weight: 700; }
.style-list .h4 { font-size: 19px; font-weight: 700; }
.style-list .dflt { font-size: 13px; }
.style-list .web { font-size: 16px; }
.style-list .body { font-size: 14px; }
.style-list .picked { padding: 0 5px 0 3px; border: 1px solid #5094ee; }
.show { display: flex; align-items: center; justify-content: space-between; }
.show .combo { width: 203px; height: 23px; }
.preview { display: flex; align-items: center; justify-content: space-between; margin-top: 11px; padding-right: 5px; }
.preview label { display: flex; align-items: center; gap: 5px; color: #262d3d; }
.preview input { display: grid; place-items: center; width: 13px; height: 13px; margin: 0; border: 1px solid #333; background: #fff; appearance: none; }
.preview input:checked::after { content: ""; width: 8px; height: 4px; margin-bottom: 3px; border: solid #333; border-width: 0 0 1px 1px; transform: rotate(-45deg); }
.preview a { display: flex; align-items: center; gap: 1px; color: #3d7df2; text-decoration: none; }

.rail { display: flex; flex-direction: column; align-items: center; gap: 4px; width: 44px; padding: 11px 2px 0 1px; border-left: 1px solid #dfe2e8; color: #3a4358; }
.grip { width: 20px; height: 4px; margin-bottom: 9px; border: solid #cdd0d7; border-width: 1px 0; }
.rail button { width: 32px; height: 32px; }
.rail-foot { width: 38px; margin-top: auto; padding: 8px 3px 3px; border-top: 1px solid #dcdfe5; }

/* Status bar */
.status { display: flex; align-items: center; height: 29px; border-top: 1px solid #dfe2e8; }
.cell { padding: 0 6px 0 9px; border-right: 1px solid #dcdfe5; line-height: 14px; }
.cell:first-child { padding-left: 10px; }
.check { gap: 4px; padding-right: 6px; }
.check span { display: flex; align-items: center; gap: 3px; height: 24px; padding: 0 3px; }
.check::after { content: ""; width: 1px; height: 14px; margin: 0 -6px 0 1px; background: #dcdfe5; }
.check + .check { margin-left: -3px; }
.spell span { background: #e8effa; }
.status-right { display: flex; align-items: center; gap: 3px; margin-left: auto; padding-right: 11px; }
.status-right button { width: 23px; height: 24px; }
.status-right .vr { height: 14px; margin: 0 8px 0 7px; }
.status-right .percent { width: 40px; gap: 5px; font-size: 13px; }
.zoom { width: 142px; height: 14px; margin: 0; background: linear-gradient(90deg, #3a4358 36%, #cfd3db 36%) center / 100% 1px no-repeat; appearance: none; }
.zoom::-webkit-slider-thumb { width: 12px; height: 12px; border: 1px solid #3a4358; border-radius: 50%; background: #f5f7f9; appearance: none; }

.watermark { position: fixed; right: 6px; bottom: 6px; z-index: 3; display: flex; align-items: center; opacity: .85; pointer-events: none; }
.swirl { width: 44px; height: 42px; margin-right: -1px; }
.watermark strong, .watermark span { display: block; }
.watermark strong { color: #4f94d4; font-size: 21px; line-height: 24px; }
.watermark span { color: #5fc088; font: 700 17px/20px "Liberation Sans", sans-serif; }
```
